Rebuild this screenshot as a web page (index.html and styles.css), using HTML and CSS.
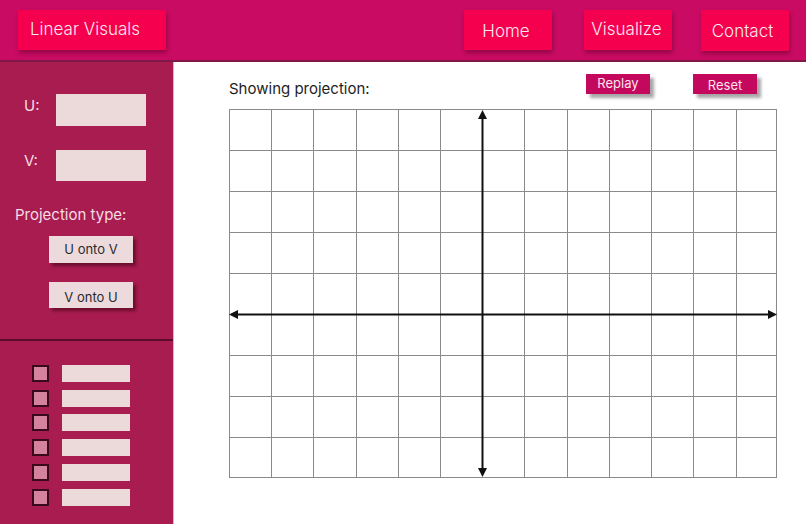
FILE: index.html
```html
<!DOCTYPE html>
<html lang="en">
<head>
  <meta charset="UTF-8" />
  <meta name="viewport" content="width=device-width, initial-scale=1.0"/>
  <title>Linear Visuals</title>
  <link rel="stylesheet" href="styles.css">
</head>
<body>
  <header class="topbar">
    <div class="brand">Linear Visuals</div>
    <nav class="nav">
      <a class="nav-item" href="#">Home</a>
      <a class="nav-item nav-visualize" href="#">Visualize</a>
      <a class="nav-item nav-contact" href="#">Contact</a>
    </nav>
  </header>

  <div class="layout">
    <aside class="sidebar">
      <div class="controls">
        <div class="vector-row">
          <label for="u">U:</label>
          <input type="text" id="u" />
        </div>
        <div class="vector-row">
          <label for="v">V:</label>
          <input type="text" id="v" />
        </div>
        <div class="proj-title">Projection type:</div>
        <button class="proj-btn">U onto V</button>
        <button class="proj-btn proj-btn-2">V onto U</button>
      </div>
      <ul class="checklist">
        <li><span class="box"></span><span class="bar"></span></li>
        <li><span class="box"></span><span class="bar"></span></li>
        <li><span class="box"></span><span class="bar"></span></li>
        <li><span class="box"></span><span class="bar"></span></li>
        <li><span class="box"></span><span class="bar"></span></li>
        <li><span class="box"></span><span class="bar"></span></li>
      </ul>
    </aside>

    <main class="main">
      <div class="toolbar">
        <span class="showing">Showing projection:</span>
        <button class="small-btn replay">Replay</button>
        <button class="small-btn reset">Reset</button>
      </div>
      <svg class="plane" width="548" height="369" viewBox="0 0 548 369">
        <g stroke="#8a8a8a" stroke-width="1">
          <!-- columns -->
          <line x1="0.5" y1="0" x2="0.5" y2="369"/>
          <line x1="42.5" y1="0" x2="42.5" y2="369"/>
          <line x1="84.5" y1="0" x2="84.5" y2="369"/>
          <line x1="127.5" y1="0" x2="127.5" y2="369"/>
          <line x1="169.5" y1="0" x2="169.5" y2="369"/>
          <line x1="211.5" y1="0" x2="211.5" y2="369"/>
          <line x1="295.5" y1="0" x2="295.5" y2="369"/>
          <line x1="338.5" y1="0" x2="338.5" y2="369"/>
          <line x1="380.5" y1="0" x2="380.5" y2="369"/>
          <line x1="422.5" y1="0" x2="422.5" y2="369"/>
          <line x1="464.5" y1="0" x2="464.5" y2="369"/>
          <line x1="507.5" y1="0" x2="507.5" y2="369"/>
          <line x1="547.5" y1="0" x2="547.5" y2="369"/>
          <!-- rows -->
          <line x1="0" y1="0.5" x2="548" y2="0.5"/>
          <line x1="0" y1="41.5" x2="548" y2="41.5"/>
          <line x1="0" y1="82.5" x2="548" y2="82.5"/>
          <line x1="0" y1="123.5" x2="548" y2="123.5"/>
          <line x1="0" y1="164.5" x2="548" y2="164.5"/>
          <line x1="0" y1="246.5" x2="548" y2="246.5"/>
          <line x1="0" y1="287.5" x2="548" y2="287.5"/>
          <line x1="0" y1="328.5" x2="548" y2="328.5"/>
          <line x1="0" y1="368.5" x2="548" y2="368.5"/>
        </g>
        <g stroke="#111" stroke-width="2">
          <line x1="253.5" y1="8" x2="253.5" y2="361"/>
          <line x1="8" y1="205.5" x2="540" y2="205.5"/>
        </g>
        <g fill="#111">
          <polygon points="253.5,1 249,10 258,10"/>
          <polygon points="253.5,368 249,359 258,359"/>
          <polygon points="0,205.5 9,201 9,210"/>
          <polygon points="548,205.5 539,201 539,210"/>
        </g>
      </svg>
    </main>
  </div>
</body>
</html>
```

FILE: styles.css
```css
* {
    box-sizing: border-box;
}

body {
    margin: 0;
    width: 806px;
    height: 524px;
    overflow: hidden;
    font-family: Inter, "Noto Sans", Arial, sans-serif;
    background-color: #fff;
}

.topbar {
    height: 62px;
    background-color: #c90b63;
    border-bottom: 2px solid #7e1946;
    display: flex;
    align-items: flex-start;
    justify-content: space-between;
    padding: 10px 17px 0 18px;
}

.brand,
.nav-item {
    background-color: #f4004e;
    color: #fde8ee;
    font-size: 17px;
    font-weight: 300;
    height: 40px;
    display: flex;
    align-items: center;
    justify-content: center;
    box-shadow: 1px 3px 4px rgba(90, 0, 40, 0.45);
    text-decoration: none;
}

.brand {
    width: 148px;
    padding: 0 14px 3px 0;
}

.nav {
    display: flex;
}

.nav-item {
    width: 88px;
    padding: 1px 4px 0 0;
}

.nav-visualize {
    margin-left: 32px;
    padding: 0 3px 2px 0;
}

.nav-contact {
    margin-left: 29px;
    height: 41px;
    padding: 0 5px 0 0;
}

.layout {
    display: flex;
    height: 462px;
}

.sidebar {
    width: 174px;
    background-color: #a81c4f;
    border-right: 1px solid #f4a3c0;
    color: #f6dde6;
    display: flex;
    flex-direction: column;
}

.controls {
    height: 279px;
    border-bottom: 2px solid #5b0c27;
    padding: 32px 0 0 15px;
}

.vector-row {
    display: flex;
    align-items: center;
    margin-bottom: 24px;
}

.vector-row label {
    width: 41px;
    padding-left: 9px;
    font-size: 15px;
    padding-bottom: 10px;
}

.vector-row input {
    width: 90px;
    height: 32px;
    border: none;
    background-color: #ecd9da;
}

.vector-row + .vector-row input {
    height: 31px;
}

.proj-title {
    font-size: 15px;
    margin-top: 5px;
    margin-bottom: 12px;
}

.proj-btn {
    display: block;
    width: 84px;
    height: 27px;
    margin-left: 34px;
    border: none;
    background-color: #eddadd;
    color: #2a2a2a;
    font-family: inherit;
    font-size: 13px;
    box-shadow: 3px 3px 3px rgba(60, 0, 20, 0.55);
    padding: 0 0 2px 0;
}

.proj-btn-2 {
    margin-top: 19px;
    height: 26px;
    padding: 4px 0 0 0;
}

.checklist {
    list-style: none;
    margin: 0;
    padding: 20px 0 0 32px;
}

.checklist li {
    display: flex;
    align-items: center;
    height: 24.8px;
}

.box {
    width: 17px;
    height: 17px;
    background-color: #d5829f;
    border: 2px solid #3a0a1c;
    margin-right: 13px;
}

.bar {
    width: 68px;
    height: 17px;
    background-color: #ecd9da;
}

.main {
    flex: 1;
    padding: 12px 0 0 55px;
}

.toolbar {
    display: flex;
    align-items: flex-start;
    height: 35px;
}

.showing {
    font-size: 15px;
    color: #1e1e1e;
    margin-top: 5px;
    width: 357px;
}

.small-btn {
    width: 64px;
    height: 20px;
    border: none;
    background-color: #c4085e;
    color: #fbe4ee;
    font-family: inherit;
    font-size: 13px;
    padding: 0 0 2px 0;
    box-shadow: 4px 4px 3px rgba(0, 0, 0, 0.35);
}

.reset {
    margin-left: 43px;
    padding: 2px 0 0 0;
}

.plane {
    display: block;
}
```
